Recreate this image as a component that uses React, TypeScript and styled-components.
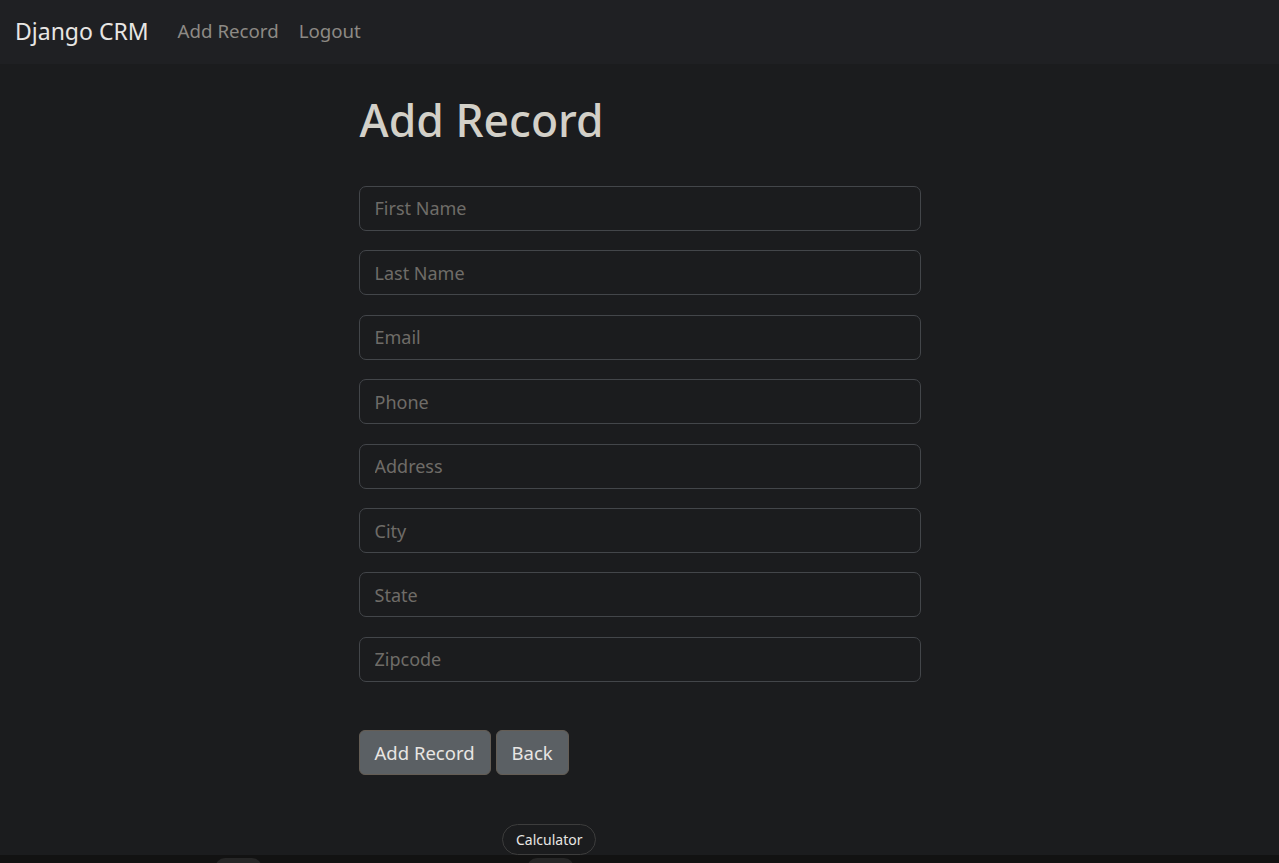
import React from "react";
import styled, { createGlobalStyle } from "styled-components";

const Global = createGlobalStyle`
  html, body { margin: 0; padding: 0; background: #1b1c1e; }
  body {
    font-family: "Noto Sans", "Open Sans", sans-serif;
    color: #e8e6e3;
    min-height: 863px;
  }
  * { box-sizing: border-box; }
`;

const Nav = styled.nav`
  height: 64px;
  background: #1f2023;
  display: flex;
  align-items: center;
  padding: 0 15px 3px;
`;

const Brand = styled.a`
  font-size: 23px;
  color: #e8e6e3;
  text-decoration: none;
  margin-right: 29px;
`;

const NavLink = styled.a`
  font-size: 18.7px;
  color: #8d8a85;
  text-decoration: none;
  margin-right: 20px;
`;

const Main = styled.main`
  width: 562px;
  margin: 0 auto;
  padding-top: 29px;
`;

const Title = styled.h1`
  font-size: 44.5px;
  font-weight: 500;
  color: #d3d0c8;
  margin: 0 0 39.5px;
  line-height: 1.2;
  padding-left: 1px;
`;

const Form = styled.form`
  display: flex;
  flex-direction: column;
  gap: 19.43px;
`;

const Input = styled.input`
  width: 100%;
  height: 45px;
  background: #1b1c1e;
  border: 1px solid #43464a;
  border-radius: 7px;
  padding: 0 15px;
  font-family: inherit;
  font-size: 18px;
  color: #e8e6e3;
  outline: none;
  &::placeholder { color: #6f6c68; }
`;

const Actions = styled.div`
  display: flex;
  gap: 5px;
  margin-top: 48px;
`;

const Button = styled.button`
  height: 45px;
  padding: 0 15px;
  background: #5b6064;
  border: 1px solid #645d55;
  border-radius: 6px;
  color: #e8e6e3;
  font-family: inherit;
  font-size: 18.5px;
`;

const Dock = styled.div`
  position: fixed;
  left: 0;
  right: 0;
  bottom: 0;
  height: 8px;
  background: #121212;
`;

const DockItem = styled.div<{ $left: number }>`
  position: absolute;
  top: 3px;
  left: ${(p) => p.$left}px;
  width: 47px;
  height: 10px;
  border-radius: 14px 14px 0 0;
  background: #262626;
`;

const Tip = styled.div`
  position: fixed;
  left: 502px;
  top: 824px;
  height: 31px;
  padding: 0 13px;
  display: flex;
  align-items: center;
  border: 1px solid #3d3d3d;
  border-radius: 16px;
  background: #1b1c1e;
  color: #e8e6e3;
  font-size: 14px;
`;

const fields = ["First Name", "Last Name", "Email", "Phone", "Address", "City", "State", "Zipcode"];

export default function App() {
  return (
    <>
      <Global />
      <Nav>
        <Brand href="#">Django CRM</Brand>
        <NavLink href="#">Add Record</NavLink>
        <NavLink href="#">Logout</NavLink>
      </Nav>
      <Main>
        <Title>Add Record</Title>
        <Form onSubmit={(e) => e.preventDefault()}>
          {fields.map((f) => (
            <Input key={f} placeholder={f} />
          ))}
        </Form>
        <Actions>
          <Button>Add Record</Button>
          <Button>Back</Button>
        </Actions>
      </Main>
      <Tip>Calculator</Tip>
      <Dock>
        <DockItem $left={215} />
        <DockItem $left={527} />
      </Dock>
    </>
  );
}
